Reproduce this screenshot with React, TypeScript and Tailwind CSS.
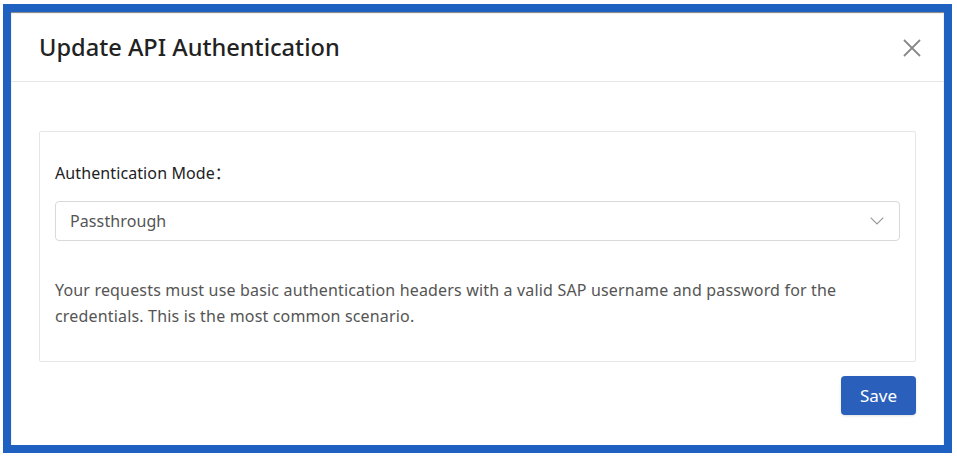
export default function App() {
  return (
    <div className="w-[957px] h-[457px] bg-white pl-[3px] pt-[4px] font-['Noto_Sans','Noto_Sans_CJK_SC',sans-serif]">
      <div className="w-[949px] h-[449px] border-8 border-[#1f61c0] bg-white flex flex-col shadow-[inset_0_1px_1px_rgba(0,0,0,0.5)]">
        <div className="h-[70px] border-b border-[#e6e6e6] flex items-center justify-between pl-[28px] pr-[23px] shrink-0">
          <h2 className="text-[23.6px] font-medium text-[#222] tracking-[0px] pt-[2px]">Update API Authentication</h2>
          <svg width="18" height="18" viewBox="0 0 18 18" className="mt-[2px]">
            <path d="M1 1L17 17M17 1L1 17" stroke="#888" strokeWidth="1.8" fill="none" />
          </svg>
        </div>
        <div className="flex-1 px-[28px] pt-[49px]">
          <div className="border border-[#e6e6e6] rounded-[2px] h-[231px] px-[15px] pt-[29px]">
            <label className="block text-[16px] text-[#222] leading-[24px] tracking-[0.1px]">Authentication Mode：</label>
            <div className="mt-[16px] h-[40px] border border-[#d9d9d9] rounded-[4px] flex items-center justify-between pl-[14px] pr-[15px]">
              <span className="text-[16px] text-[#555] tracking-[0.1px]">Passthrough</span>
              <svg width="14" height="8" viewBox="0 0 14 8">
                <path d="M0.7 0.7L7 7L13.3 0.7" stroke="#999" strokeWidth="1.2" fill="none" />
              </svg>
            </div>
            <p className="mt-[36px] text-[16px] leading-[26px] text-[#555] tracking-[0.17px] pr-[30px]">
              Your requests must use basic authentication headers with a valid SAP username and password for the credentials. This is the most common scenario.
            </p>
          </div>
          <div className="flex justify-end mt-[14px]">
            <button className="w-[75px] h-[39px] rounded-[4px] bg-[#2b5fbc] text-white text-[17px] shadow-sm">Save</button>
          </div>
        </div>
      </div>
    </div>
  );
}
